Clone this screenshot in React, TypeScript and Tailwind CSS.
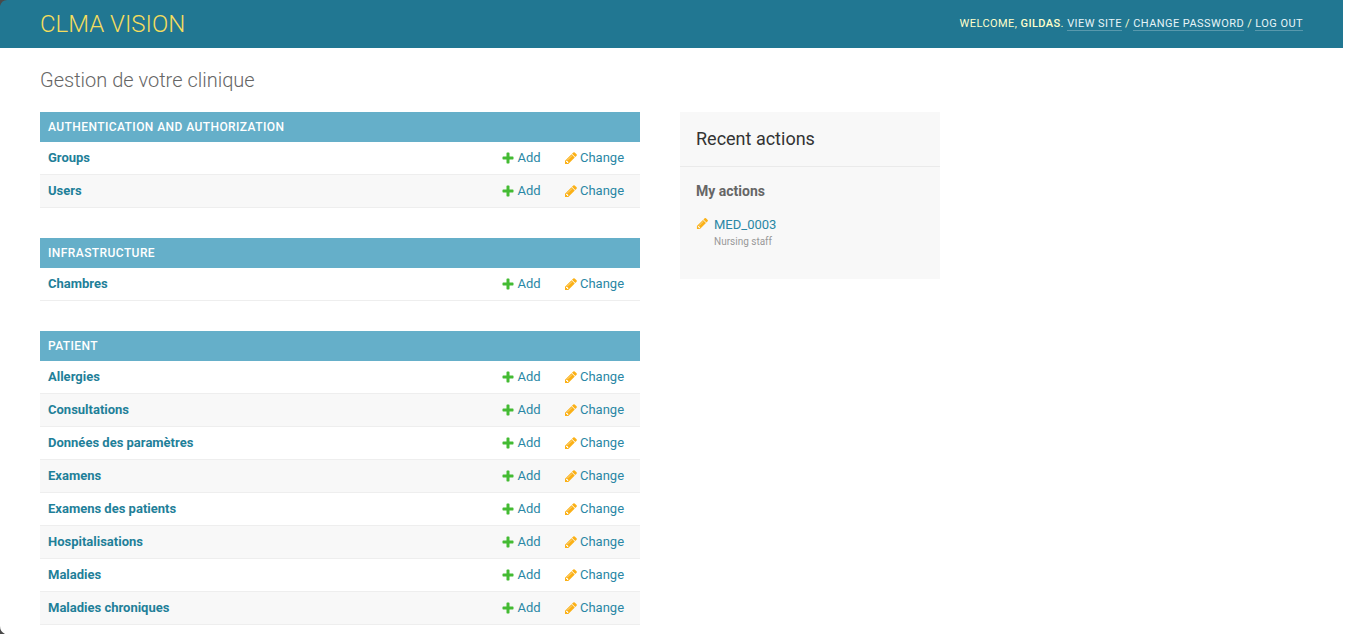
const plus = "M1600 796v192q0 40-28 68t-68 28h-416v416q0 40-28 68t-68 28h-192q-40 0-68-28t-28-68v-416h-416q-40 0-68-28t-28-68v-192q0-40 28-68t68-28h416v-416q0-40 28-68t68-28h192q40 0 68 28t28 68v416h416q40 0 68 28t28 68z";
const pencil = "M491 1536l91-91-235-235-91 91v107h128v128h107zm523-928q0-22-22-22-10 0-17 7l-542 542q-7 7-7 17 0 22 22 22 10 0 17-7l542-542q7-7 7-17zm-54-192l416 416-832 832h-416v-416zm683 96q0 53-37 90l-166 166-416-416 166-165q36-38 90-38 53 0 91 38l235 234q37 39 37 91z";

function Icon({ d, className }: { d: string; className: string }) {
  return (
    <svg viewBox="0 0 1792 1792" className={className} aria-hidden="true">
      <path d={d} />
    </svg>
  );
}

function Module({ title, rows }: { title: string; rows: string[] }) {
  return (
    <section className="mb-[30px]">
      <h2 className="h-[30px] bg-[#65afc9] px-2 text-[12px] leading-[30px] font-medium tracking-[0.42px] text-white uppercase">
        {title}
      </h2>
      {rows.map((row, i) => (
        <div
          key={row}
          className={`flex h-[33px] items-center border-b border-[#eeeeee] pr-4 pl-2 text-[13px] ${i % 2 ? "bg-[#f8f8f8]" : "bg-white"}`}
        >
          <a className="flex-1 font-bold text-[#1f8099]">{row}</a>
          <a className="flex w-[38px] items-center gap-[3px] text-[#2a87a5]">
            <Icon d={plus} className="mb-[1px] -ml-[1.5px] h-[14px] w-[14px] shrink-0 fill-[#44bb33]" />
            Add
          </a>
          <a className="ml-[24px] flex w-[60px] items-center gap-[2px] text-[#2a87a5]">
            <Icon d={pencil} className="mb-[1px] h-[14px] w-[14px] shrink-0 fill-[#fbb117]" />
            Change
          </a>
        </div>
      ))}
    </section>
  );
}

export default function App() {
  return (
    <div className="relative h-[634px] overflow-hidden bg-white pr-[2px] font-['Roboto',sans-serif] text-[#333333]">
      <header className="flex h-[48px] items-center justify-between bg-[#217792] px-[40px]">
        <h1 className="text-[24px] leading-[28px] font-light text-[#f5dd5d]">CLMA VISION</h1>
        <div className="text-[11px] font-normal tracking-[0.43px] text-[#ffffcc] uppercase">
          Welcome, <strong className="font-medium">Gildas</strong>.{" "}
          <a className="border-b border-white/25 text-[#e6f4f7]">View site</a> /{" "}
          <a className="border-b border-white/25 text-[#e6f4f7]">Change password</a> /{" "}
          <a className="border-b border-white/25 text-[#e6f4f7]">Log out</a>
        </div>
      </header>
      <main className="px-[40px] pt-[20px]">
        <h1 className="mb-[20px] text-[20px] leading-[24px] font-light text-[#666666]">Gestion de votre clinique</h1>
        <div className="flex items-start gap-[40px]">
          <div className="w-[600px]">
            <Module title="Authentication and Authorization" rows={["Groups", "Users"]} />
            <Module title="Infrastructure" rows={["Chambres"]} />
            <Module
              title="Patient"
              rows={[
                "Allergies",
                "Consultations",
                "Données des paramètres",
                "Examens",
                "Examens des patients",
                "Hospitalisations",
                "Maladies",
                "Maladies chroniques",
              ]}
            />
          </div>
          <aside className="h-[167px] w-[260px] bg-[#f8f8f8]">
            <h2 className="flex h-[55px] items-center border-b border-[#eaeaea] px-4 pb-[2px] text-[18px] text-[#333333]">Recent actions</h2>
            <div className="px-4 pt-[16px]">
              <h3 className="text-[14px] leading-[17px] font-bold text-[#666666]">My actions</h3>
              <div className="mt-[17px] flex gap-[5px]">
                <Icon d={pencil} className="h-[13px] w-[13px] fill-[#fbb117]" />
                <div>
                  <a className="block text-[13px] leading-[16px] text-[#2a87a5]">MED_0003</a>
                  <span className="mt-[2px] block text-[10px] leading-[14px] text-[#999999]">Nursing staff</span>
                </div>
              </div>
            </div>
          </aside>
        </div>
      </main>
      <svg viewBox="0 0 8 8" className="absolute top-0 left-0 h-[8px] w-[8px] fill-[#4a4a4a]" aria-hidden="true">
        <path d="M0 0H8A8 8 0 0 0 0 6Z" />
      </svg>
      <svg viewBox="0 0 5 8" className="absolute bottom-0 left-0 h-[8px] w-[5px] fill-[#4a4a4a]" aria-hidden="true">
        <path d="M0 0A9 9 0 0 0 5 8H0Z" />
      </svg>
    </div>
  );
}
